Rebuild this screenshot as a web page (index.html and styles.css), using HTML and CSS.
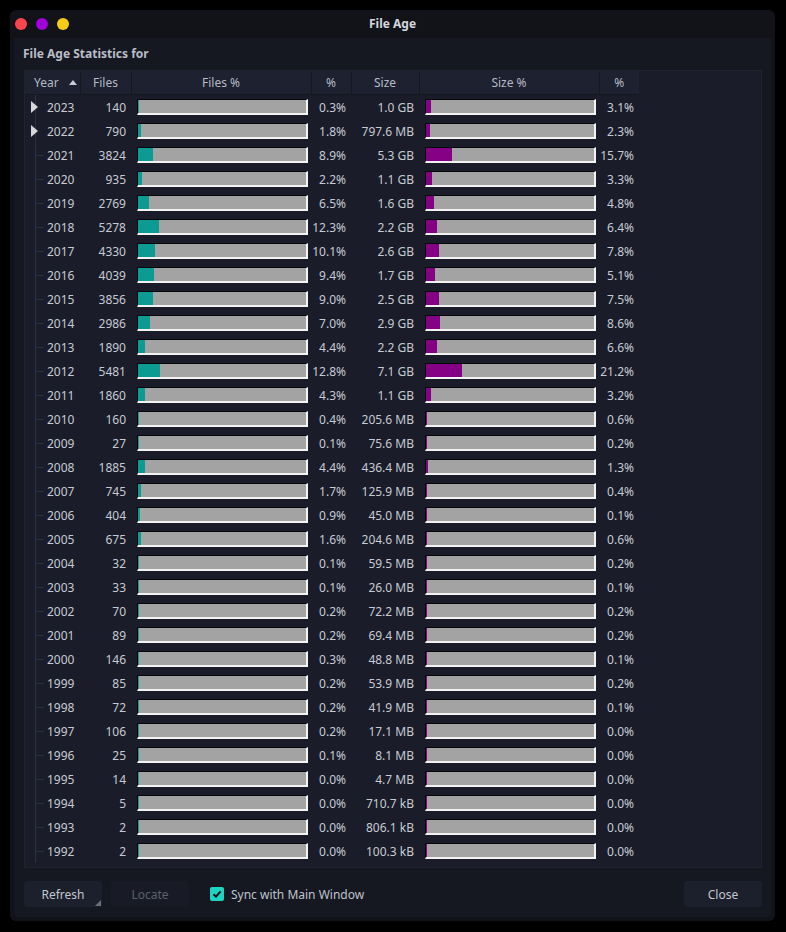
FILE: index.html
```html
<!DOCTYPE html>
<html>
<head>
<meta charset="UTF-8"/>
<title>File Age</title>
<link rel="stylesheet" href="styles.css">
</head>
<body>
<div class="window">
<div class="titlebar">
<div class="lights"><span class="light red"></span><span class="light purple"></span><span class="light yellow"></span></div>
<div class="title">File Age</div>
</div>
<div class="panel">
<div class="heading">File Age Statistics for</div>
<div class="frame">
<table class="stats">
<colgroup><col class="c-year"><col class="c-files"><col class="c-bar"><col class="c-pct"><col class="c-size"><col class="c-bar"><col class="c-pct2"></colgroup>
<thead>
<tr><th class="year-h">Year <span class="sort"></span></th><th>Files</th><th>Files %</th><th>%</th><th>Size</th><th>Size %</th><th>%</th></tr>
</thead>
<tbody>
<tr><td class="year expand">2023</td><td class="num">140</td><td><div class="bar"><div class="fill teal" style="width:0.3%"></div></div></td><td class="num">0.3%</td><td class="size">1.0 GB</td><td><div class="bar"><div class="fill purple" style="width:3.1%"></div></div></td><td class="num">3.1%</td></tr>
<tr><td class="year expand">2022</td><td class="num">790</td><td><div class="bar"><div class="fill teal" style="width:1.8%"></div></div></td><td class="num">1.8%</td><td class="size">797.6 MB</td><td><div class="bar"><div class="fill purple" style="width:2.3%"></div></div></td><td class="num">2.3%</td></tr>
<tr><td class="year">2021</td><td class="num">3824</td><td><div class="bar"><div class="fill teal" style="width:8.9%"></div></div></td><td class="num">8.9%</td><td class="size">5.3 GB</td><td><div class="bar"><div class="fill purple" style="width:15.7%"></div></div></td><td class="num">15.7%</td></tr>
<tr><td class="year">2020</td><td class="num">935</td><td><div class="bar"><div class="fill teal" style="width:2.2%"></div></div></td><td class="num">2.2%</td><td class="size">1.1 GB</td><td><div class="bar"><div class="fill purple" style="width:3.3%"></div></div></td><td class="num">3.3%</td></tr>
<tr><td class="year">2019</td><td class="num">2769</td><td><div class="bar"><div class="fill teal" style="width:6.5%"></div></div></td><td class="num">6.5%</td><td class="size">1.6 GB</td><td><div class="bar"><div class="fill purple" style="width:4.8%"></div></div></td><td class="num">4.8%</td></tr>
<tr><td class="year">2018</td><td class="num">5278</td><td><div class="bar"><div class="fill teal" style="width:12.3%"></div></div></td><td class="num">12.3%</td><td class="size">2.2 GB</td><td><div class="bar"><div class="fill purple" style="width:6.4%"></div></div></td><td class="num">6.4%</td></tr>
<tr><td class="year">2017</td><td class="num">4330</td><td><div class="bar"><div class="fill teal" style="width:10.1%"></div></div></td><td class="num">10.1%</td><td class="size">2.6 GB</td><td><div class="bar"><div class="fill purple" style="width:7.8%"></div></div></td><td class="num">7.8%</td></tr>
<tr><td class="year">2016</td><td class="num">4039</td><td><div class="bar"><div class="fill teal" style="width:9.4%"></div></div></td><td class="num">9.4%</td><td class="size">1.7 GB</td><td><div class="bar"><div class="fill purple" style="width:5.1%"></div></div></td><td class="num">5.1%</td></tr>
<tr><td class="year">2015</td><td class="num">3856</td><td><div class="bar"><div class="fill teal" style="width:9.0%"></div></div></td><td class="num">9.0%</td><td class="size">2.5 GB</td><td><div class="bar"><div class="fill purple" style="width:7.5%"></div></div></td><td class="num">7.5%</td></tr>
<tr><td class="year">2014</td><td class="num">2986</td><td><div class="bar"><div class="fill teal" style="width:7.0%"></div></div></td><td class="num">7.0%</td><td class="size">2.9 GB</td><td><div class="bar"><div class="fill purple" style="width:8.6%"></div></div></td><td class="num">8.6%</td></tr>
<tr><td class="year">2013</td><td class="num">1890</td><td><div class="bar"><div class="fill teal" style="width:4.4%"></div></div></td><td class="num">4.4%</td><td class="size">2.2 GB</td><td><div class="bar"><div class="fill purple" style="width:6.6%"></div></div></td><td class="num">6.6%</td></tr>
<tr><td class="year">2012</td><td class="num">5481</td><td><div class="bar"><div class="fill teal" style="width:12.8%"></div></div></td><td class="num">12.8%</td><td class="size">7.1 GB</td><td><div class="bar"><div class="fill purple" style="width:21.2%"></div></div></td><td class="num">21.2%</td></tr>
<tr><td class="year">2011</td><td class="num">1860</td><td><div class="bar"><div class="fill teal" style="width:4.3%"></div></div></td><td class="num">4.3%</td><td class="size">1.1 GB</td><td><div class="bar"><div class="fill purple" style="width:3.2%"></div></div></td><td class="num">3.2%</td></tr>
<tr><td class="year">2010</td><td class="num">160</td><td><div class="bar"><div class="fill teal" style="width:0.4%"></div></div></td><td class="num">0.4%</td><td class="size">205.6 MB</td><td><div class="bar"><div class="fill purple" style="width:0.6%"></div></div></td><td class="num">0.6%</td></tr>
<tr><td class="year">2009</td><td class="num">27</td><td><div class="bar"><div class="fill teal" style="width:0.1%"></div></div></td><td class="num">0.1%</td><td class="size">75.6 MB</td><td><div class="bar"><div class="fill purple" style="width:0.2%"></div></div></td><td class="num">0.2%</td></tr>
<tr><td class="year">2008</td><td class="num">1885</td><td><div class="bar"><div class="fill teal" style="width:4.4%"></div></div></td><td class="num">4.4%</td><td class="size">436.4 MB</td><td><div class="bar"><div class="fill purple" style="width:1.3%"></div></div></td><td class="num">1.3%</td></tr>
<tr><td class="year">2007</td><td class="num">745</td><td><div class="bar"><div class="fill teal" style="width:1.7%"></div></div></td><td class="num">1.7%</td><td class="size">125.9 MB</td><td><div class="bar"><div class="fill purple" style="width:0.4%"></div></div></td><td class="num">0.4%</td></tr>
<tr><td class="year">2006</td><td class="num">404</td><td><div class="bar"><div class="fill teal" style="width:0.9%"></div></div></td><td class="num">0.9%</td><td class="size">45.0 MB</td><td><div class="bar"><div class="fill purple" style="width:0.1%"></div></div></td><td class="num">0.1%</td></tr>
<tr><td class="year">2005</td><td class="num">675</td><td><div class="bar"><div class="fill teal" style="width:1.6%"></div></div></td><td class="num">1.6%</td><td class="size">204.6 MB</td><td><div class="bar"><div class="fill purple" style="width:0.6%"></div></div></td><td class="num">0.6%</td></tr>
<tr><td class="year">2004</td><td class="num">32</td><td><div class="bar"><div class="fill teal" style="width:0.1%"></div></div></td><td class="num">0.1%</td><td class="size">59.5 MB</td><td><div class="bar"><div class="fill purple" style="width:0.2%"></div></div></td><td class="num">0.2%</td></tr>
<tr><td class="year">2003</td><td class="num">33</td><td><div class="bar"><div class="fill teal" style="width:0.1%"></div></div></td><td class="num">0.1%</td><td class="size">26.0 MB</td><td><div class="bar"><div class="fill purple" style="width:0.1%"></div></div></td><td class="num">0.1%</td></tr>
<tr><td class="year">2002</td><td class="num">70</td><td><div class="bar"><div class="fill teal" style="width:0.2%"></div></div></td><td class="num">0.2%</td><td class="size">72.2 MB</td><td><div class="bar"><div class="fill purple" style="width:0.2%"></div></div></td><td class="num">0.2%</td></tr>
<tr><td class="year">2001</td><td class="num">89</td><td><div class="bar"><div class="fill teal" style="width:0.2%"></div></div></td><td class="num">0.2%</td><td class="size">69.4 MB</td><td><div class="bar"><div class="fill purple" style="width:0.2%"></div></div></td><td class="num">0.2%</td></tr>
<tr><td class="year">2000</td><td class="num">146</td><td><div class="bar"><div class="fill teal" style="width:0.3%"></div></div></td><td class="num">0.3%</td><td class="size">48.8 MB</td><td><div class="bar"><div class="fill purple" style="width:0.1%"></div></div></td><td class="num">0.1%</td></tr>
<tr><td class="year">1999</td><td class="num">85</td><td><div class="bar"><div class="fill teal" style="width:0.2%"></div></div></td><td class="num">0.2%</td><td class="size">53.9 MB</td><td><div class="bar"><div class="fill purple" style="width:0.2%"></div></div></td><td class="num">0.2%</td></tr>
<tr><td class="year">1998</td><td class="num">72</td><td><div class="bar"><div class="fill teal" style="width:0.2%"></div></div></td><td class="num">0.2%</td><td class="size">41.9 MB</td><td><div class="bar"><div class="fill purple" style="width:0.1%"></div></div></td><td class="num">0.1%</td></tr>
<tr><td class="year">1997</td><td class="num">106</td><td><div class="bar"><div class="fill teal" style="width:0.2%"></div></div></td><td class="num">0.2%</td><td class="size">17.1 MB</td><td><div class="bar"><div class="fill purple" style="width:0%"></div></div></td><td class="num">0.0%</td></tr>
<tr><td class="year">1996</td><td class="num">25</td><td><div class="bar"><div class="fill teal" style="width:0.1%"></div></div></td><td class="num">0.1%</td><td class="size">8.1 MB</td><td><div class="bar"><div class="fill purple" style="width:0%"></div></div></td><td class="num">0.0%</td></tr>
<tr><td class="year">1995</td><td class="num">14</td><td><div class="bar"><div class="fill teal" style="width:0%"></div></div></td><td class="num">0.0%</td><td class="size">4.7 MB</td><td><div class="bar"><div class="fill purple" style="width:0%"></div></div></td><td class="num">0.0%</td></tr>
<tr><td class="year">1994</td><td class="num">5</td><td><div class="bar"><div class="fill teal" style="width:0%"></div></div></td><td class="num">0.0%</td><td class="size">710.7 kB</td><td><div class="bar"><div class="fill purple" style="width:0%"></div></div></td><td class="num">0.0%</td></tr>
<tr><td class="year">1993</td><td class="num">2</td><td><div class="bar"><div class="fill teal" style="width:0%"></div></div></td><td class="num">0.0%</td><td class="size">806.1 kB</td><td><div class="bar"><div class="fill purple" style="width:0%"></div></div></td><td class="num">0.0%</td></tr>
<tr><td class="year">1992</td><td class="num">2</td><td><div class="bar"><div class="fill teal" style="width:0%"></div></div></td><td class="num">0.0%</td><td class="size">100.3 kB</td><td><div class="bar"><div class="fill purple" style="width:0%"></div></div></td><td class="num">0.0%</td></tr>
</tbody>
</table>
</div>
<div class="buttons">
<button class="btn menu">Refresh</button>
<button class="btn" disabled>Locate</button>
<label class="check"><span class="box"><svg width="10" height="10" viewBox="0 0 10 10"><path d="M1.5 5.2 L4 7.6 L8.6 2.4" fill="none" stroke="#11131a" stroke-width="2"/></svg></span>Sync with Main Window</label>
<span class="spacer"></span>
<button class="btn">Close</button>
</div>
</div>
</div>
</body>
</html>
```

FILE: styles.css
```css
html, body {
    margin: 0;
    background: #000;
}
body {
    font-family: "Noto Sans", sans-serif;
    font-size: 12px;
    color: #c6cad3;
    width: 786px;
    height: 932px;
    padding: 10px 11px 11px 10px;
    box-sizing: border-box;
}
.window {
    background: #111319;
    border-radius: 6px;
    height: 911px;
    display: flex;
    flex-direction: column;
}
.titlebar {
    height: 28px;
    display: flex;
    align-items: center;
    position: relative;
}
.lights {
    display: flex;
    gap: 9px;
    padding-left: 5px;
}
.light {
    width: 12px;
    height: 12px;
    border-radius: 50%;
}
.red { background: #f9464d; }
.purple { background: #a200d8; }
.yellow { background: #f7cc15; }
.title {
    position: absolute;
    left: 0;
    right: 0;
    text-align: center;
    font-weight: bold;
    color: #d4d7de;
    top: 5px;
}
.panel {
    flex: 1;
    margin: 0 4px 4px 4px;
    background: #151821;
    border-radius: 0 0 4px 4px;
    padding: 0 9px 0 9px;
    display: flex;
    flex-direction: column;
}
.heading {
    font-weight: bold;
    color: #b9bdc7;
    height: 32px;
    line-height: 32px;
}
.frame {
    height: 798px;
    box-sizing: border-box;
    border: 1px solid #1f2330;
    background: #1a1d29;
    margin-left: 1px;
    width: 738px;
}
.stats {
    border-collapse: collapse;
    table-layout: fixed;
    width: 614px;
}
.c-year { width: 55px; }
.c-files { width: 51px; }
.c-bar { width: 180px; }
.c-pct { width: 40px; }
.c-size { width: 68px; }
.c-pct2 { width: 40px; }
.stats th {
    height: 23px;
    padding: 0;
    font-weight: normal;
    color: #b6bac5;
    background: #1d2130;
    border-left: 1px solid #151821;
    border-bottom: 1px solid #151821;
    text-align: center;
}
.stats th:first-child { border-left: none; }
.stats th.year-h {
    text-align: left;
    padding-left: 9px;
}
.sort {
    display: inline-block;
    width: 0;
    height: 0;
    border-left: 4px solid transparent;
    border-right: 4px solid transparent;
    border-bottom: 5px solid #c8ccd4;
    margin-left: 7px;
    vertical-align: 2px;
}
.stats td {
    height: 24px;
    padding: 0;
    white-space: nowrap;
}
.stats td.year {
    position: relative;
    padding-left: 22px;
}
.stats td.year::before {
    content: "";
    position: absolute;
    left: 10px;
    top: 0;
    bottom: 0;
    border-left: 1px solid #2c3140;
}
.stats td.year::after {
    content: "";
    position: absolute;
    left: 11px;
    top: 12px;
    width: 8px;
    border-top: 1px solid #2c3140;
}
.stats td.expand::after {
    border: none;
    top: 6px;
    left: 6px;
    width: 0;
    height: 0;
    border-top: 6px solid transparent;
    border-bottom: 6px solid transparent;
    border-left: 7px solid #d4d7dd;
}
.num {
    text-align: right;
    padding-right: 5px !important;
}
.size {
    text-align: right;
    padding-right: 5px !important;
}
.bar {
    margin: 0 3px 0 6px;
    height: 16px;
    box-sizing: border-box;
    background: #a3a3a3;
    border-top: 1px solid #06070a;
    border-left: 1px solid #06070a;
    border-right: 2px solid #f2f2f2;
    border-bottom: 2px solid #f2f2f2;
    display: flex;
}
.fill {
    min-width: 1px;
    height: 100%;
}
.teal { background: #0c9b93; }
.purple.fill { background: #840084; }
.buttons {
    display: flex;
    align-items: center;
    gap: 9px;
    margin-top: 13px;
    padding-left: 1px;
}
.btn {
    font-family: "Noto Sans", sans-serif;
    font-size: 12px;
    color: #c2c6cf;
    background: #1c1f2c;
    border: none;
    border-radius: 3px;
    width: 78px;
    height: 26px;
    position: relative;
}
.btn:disabled {
    color: #5b606d;
    background: #181b26;
}
.btn.menu::after {
    content: "";
    position: absolute;
    right: 1px;
    bottom: 1px;
    border-left: 6px solid transparent;
    border-bottom: 6px solid #6a6f7c;
}
.check {
    display: flex;
    align-items: center;
    gap: 7px;
    margin-left: 12px;
    color: #bfc3cc;
}
.box {
    width: 14px;
    height: 14px;
    border-radius: 2px;
    background: #1ed3c1;
    display: flex;
    align-items: center;
    justify-content: center;
}
.spacer { flex: 1; }
```
